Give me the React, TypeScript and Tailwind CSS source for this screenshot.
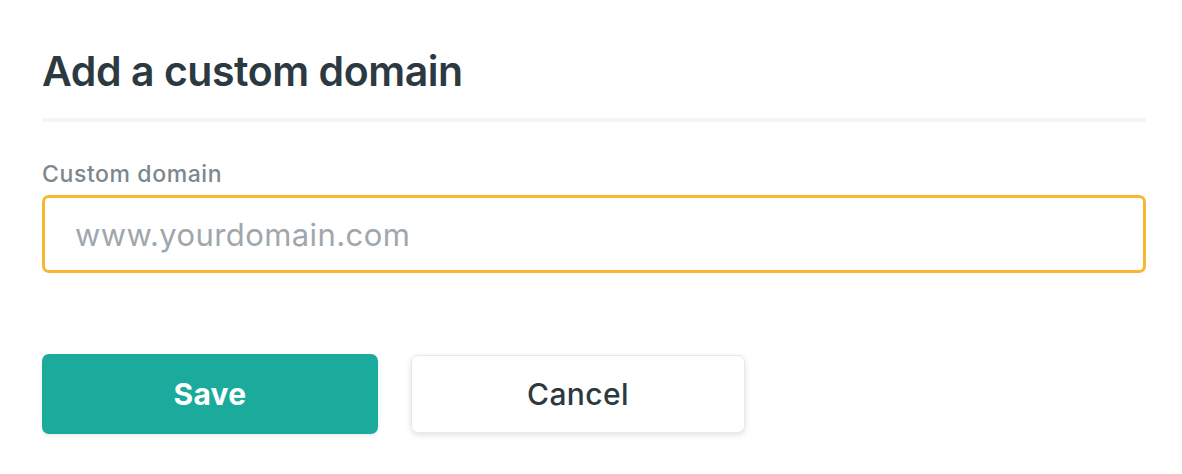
export default function App() {
  return (
    <div className="min-h-screen bg-white font-['Inter',sans-serif]">
      <div className="px-[42px] pt-[45px] w-[1188px]">
        {/* Header */}
        <h1 className="text-[41px] leading-[52px] font-semibold text-[#2c3940] tracking-[-0.45px]">Add a custom domain</h1>
        <div className="mt-[21px] h-[4px] w-[1104px] bg-[#f4f5f6]" />

        {/* Field */}
        <label className="block mt-[39px] text-[23px] leading-[26px] font-medium text-[#7d878e] tracking-[0.6px]">Custom domain</label>
        <input
          type="text"
          placeholder="www.yourdomain.com"
          className="mt-[8px] block w-[1104px] h-[78px] rounded-[7px] border-[3px] border-[#f7b731] px-[30px] text-[31px] tracking-[0.4px] text-[#2c3940] placeholder:text-[#a0a7ac] outline-none"
        />

        {/* Actions */}
        <div className="flex gap-[33px] mt-[81px]">
          <button className="w-[336px] h-[80px] rounded-[7px] bg-[#1aab9c] text-white text-[30px] tracking-[0.3px] font-bold shadow-[0_2px_4px_rgba(0,0,0,0.08)]">
            Save
          </button>
          <button className="w-[334px] h-[78px] mt-[1px] rounded-[7px] bg-white border border-[#e6e8ea] text-[#2c3940] text-[30px] tracking-[0.4px] font-medium shadow-[0_2px_6px_rgba(0,0,0,0.12)]">
            Cancel
          </button>
        </div>
      </div>
    </div>
  );
}
